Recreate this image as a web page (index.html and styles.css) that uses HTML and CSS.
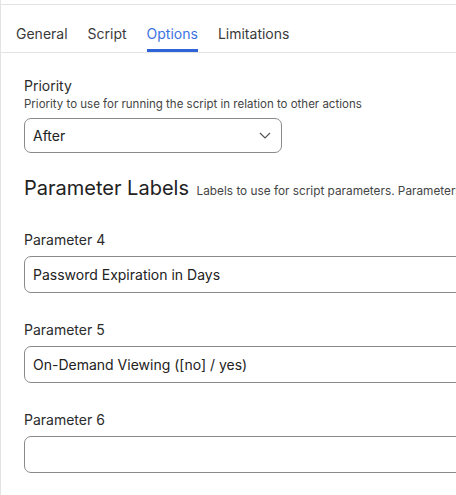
FILE: index.html
```html
<!DOCTYPE html>
<html>
<head>
<meta charset="utf-8">
<link rel="stylesheet" href="styles.css">
</head>
<body>
<div class="page">
  <div class="topline"></div>
  <nav class="tabs">
    <span class="tab">General</span>
    <span class="tab">Script</span>
    <span class="tab active">Options</span>
    <span class="tab">Limitations</span>
  </nav>
  <main class="content">
    <section class="field priority">
      <div class="label">Priority</div>
      <div class="help">Priority to use for running the script in relation to other actions</div>
      <div class="select">
        <span>After</span>
        <svg class="chev" width="12" height="7" viewBox="0 0 12 7"><path d="M1 1 L6 6 L11 1" fill="none" stroke="#555" stroke-width="1.2"/></svg>
      </div>
    </section>
    <h2 class="heading">Parameter Labels <span class="sub">Labels to use for script parameters. Parameters 1 through 3 are predefined as mount point, computer name, and username</span></h2>
    <section class="field param">
      <div class="label">Parameter 4</div>
      <div class="input">Password Expiration in Days</div>
    </section>
    <section class="field param">
      <div class="label">Parameter 5</div>
      <div class="input">On-Demand Viewing ([no] / yes)</div>
    </section>
    <section class="field param">
      <div class="label">Parameter 6</div>
      <div class="input"></div>
    </section>
  </main>
</div>
</body>
</html>
```
FILE: styles.css
```css
html, body {
  margin: 0;
  padding: 0;
  overflow: hidden;
  background: #fff;
}
body {
  font-family: Inter, "Noto Sans", sans-serif;
  color: #2b2b2b;
  width: 456px;
  height: 495px;
}
.page {
  width: 700px;
  height: 495px;
  border-left: 1px solid #e3e3e3;
}
.topline {
  height: 4px;
  border-bottom: 1px solid #e3e3e3;
}
.tabs {
  display: flex;
  gap: 20px;
  padding-left: 15px;
  border-bottom: 1px solid #e3e3e3;
}
.tab {
  font-size: 14px;
  line-height: 20px;
  padding-top: 19px;
  padding-bottom: 5px;
  border-bottom: 3px solid transparent;
  color: #3a3a3a;
}
.tab.active {
  color: #3b73e0;
  border-bottom-color: #2f64d9;
}
.content {
  padding-left: 23px;
  padding-top: 24px;
}
.label {
  font-size: 14px;
  line-height: 18px;
  color: #2b2b2b;
}
.help {
  font-size: 11.5px;
  line-height: 16px;
  color: #444;
  margin-top: 1px;
}
.select {
  margin-top: 6px;
  width: 258px;
  height: 35px;
  box-sizing: border-box;
  border: 1px solid #8a8a8a;
  border-radius: 7px;
  display: flex;
  align-items: center;
  justify-content: space-between;
  padding: 0 10px 0 8px;
  font-size: 14px;
  color: #222;
}
.chev {
  display: block;
}
.heading {
  font-weight: 400;
  font-size: 20px;
  line-height: 24px;
  margin: 23px 0 0 0;
  color: #222;
  white-space: nowrap;
}
.sub {
  font-size: 11.8px;
  color: #444;
  margin-left: 2px;
}
.param {
  margin-top: 28px;
}
.heading + .param {
  margin-top: 28px;
}
.input {
  margin-top: 7px;
  width: 600px;
  height: 37px;
  box-sizing: border-box;
  border: 1px solid #8a8a8a;
  border-radius: 7px;
  padding-left: 8px;
  display: flex;
  align-items: center;
  font-size: 14px;
  color: #222;
}
```
